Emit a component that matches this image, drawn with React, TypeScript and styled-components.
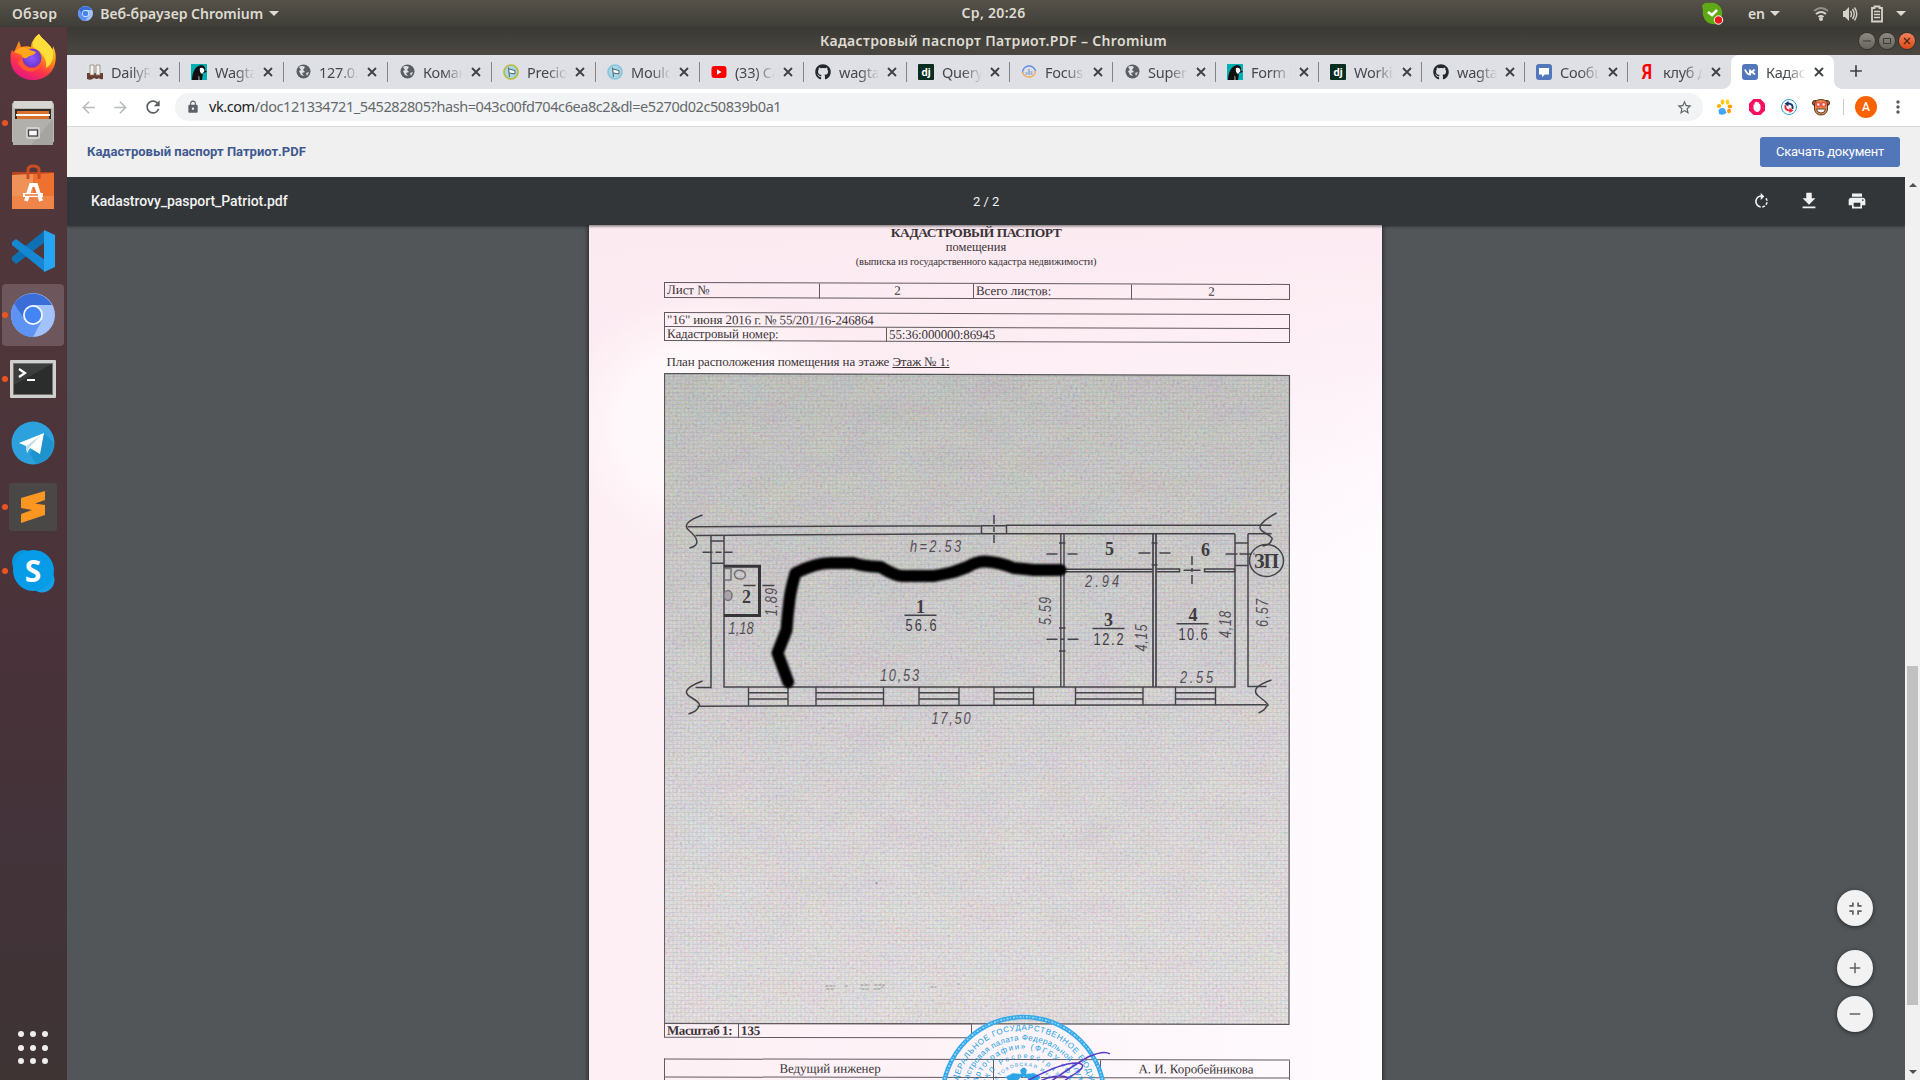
import React from 'react';
import styled, { createGlobalStyle } from 'styled-components';
import { FaGithub } from 'react-icons/fa';
import {
  MdArrowBack,
  MdArrowForward,
  MdRefresh,
  MdLock,
  MdStarBorder,
  MdRotateRight,
  MdFileDownload,
  MdPrint,
  MdAdd,
  MdMoreVert,
  MdFullscreenExit,
  MdRemove,
} from 'react-icons/md';

const ui = '"Noto Sans", "Open Sans", sans-serif';
const serif = '"Liberation Serif", "Times New Roman", serif';

const Global = createGlobalStyle`
  * { box-sizing: border-box; }
  html, body { margin: 0; overflow: hidden; }
  svg { display: block; flex: none; }
`;

const Desktop = styled.div`
  width: 1920px;
  height: 1080px;
  display: flex;
  flex-direction: column;
  overflow: hidden;
  font-family: ${ui};
`;

/* ---------- system bar ---------- */

const SystemBar = styled.header`
  height: 27px;
  flex: none;
  display: grid;
  grid-template-columns: 1fr auto 1fr;
  align-items: center;
  background: linear-gradient(#56524a, #3e3d37);
  color: #dfdbd2;
  font-size: 14px;
  font-weight: 600;
  white-space: nowrap;
`;

const SystemLeft = styled.div`
  display: flex;
  align-items: center;
  padding-left: 12px;
`;

const SystemText = styled.span<{ $gap?: number; $track?: number }>`
  margin-left: ${(p) => p.$gap ?? 0}px;
  letter-spacing: ${(p) => p.$track ?? 0}px;
`;

const Clock = styled.div`
  letter-spacing: 0.3px;
  padding: 0 0 2px 67px;
`;

const SystemRight = styled.div`
  display: flex;
  align-items: center;
  justify-content: flex-end;
  padding-right: 14px;
`;

const TrayItem = styled.div<{ $right?: number }>`
  margin-right: ${(p) => p.$right ?? 0}px;
  display: flex;
  align-items: center;
`;

const Caret = styled.i<{ $gap?: number }>`
  margin-left: ${(p) => p.$gap ?? 0}px;
  border: 5px solid transparent;
  border-top-color: #dfdbd2;
  border-bottom: 0;
`;

/* ---------- launcher ---------- */

const Main = styled.div`
  flex: 1;
  display: flex;
  min-height: 0;
`;

const Launcher = styled.nav`
  width: 67px;
  flex: none;
  display: flex;
  flex-direction: column;
  background: linear-gradient(#53383c, #4c353a 40%, #493239 60%, #43333a 78%, #3e3434);
`;

const LauncherItem = styled.div<{ $active?: boolean }>`
  height: 62px;
  margin: 0 3px 2px 2px;
  border-radius: 4px;
  display: flex;
  align-items: center;
  background: ${(p) => (p.$active ? '#6d575c' : 'transparent')};
  &:first-child { margin-top: 1px; padding-bottom: 3px; }
`;

const RunningDot = styled.i<{ $on?: boolean }>`
  width: 6px;
  height: 6px;
  border-radius: 50%;
  background: ${(p) => (p.$on ? '#e95420' : 'transparent')};
  margin-right: 1px;
`;

const AppsGrid = styled.div`
  margin: auto 0 14px 18px;
  display: grid;
  grid-template-columns: repeat(3, 6px);
  gap: 6px;
  i { height: 6px; border-radius: 50%; background: #eee; }
  height: 35px;
`;

/* ---------- window ---------- */

const Window = styled.div`
  flex: 1;
  display: flex;
  flex-direction: column;
  min-width: 0;
`;

const TitleBar = styled.div`
  height: 28px;
  flex: none;
  display: grid;
  grid-template-columns: 1fr auto 1fr;
  align-items: center;
  background: linear-gradient(#3a3934, #4b4841);
  color: #dfdbd2;
  font-size: 14px;
  font-weight: 600;
  padding-bottom: 1px;
`;

const TitleText = styled.div`
  grid-column: 2;
  letter-spacing: 0.33px;
  white-space: nowrap;
`;

const WindowButtons = styled.div`
  display: flex;
  gap: 4px;
  justify-content: flex-end;
  padding-right: 5px;
`;

const WindowButton = styled.i<{ $close?: boolean }>`
  width: 16px;
  height: 16px;
  border-radius: 50%;
  display: grid;
  place-items: center;
  background: ${(p) => (p.$close ? 'linear-gradient(#f4825c,#dd4814)' : 'linear-gradient(#8c8a83,#66645d)')};
  box-shadow: 0 0 0 1px #34322e;
`;

const TabStrip = styled.div`
  height: 34px;
  flex: none;
  background: #dee0e6;
  display: flex;
  padding-left: 9px;
`;

const Tab = styled.div<{ $w: number; $active?: boolean; $bare?: boolean }>`
  width: ${(p) => p.$w}px;
  flex: none;
  display: flex;
  align-items: center;
  padding: 0 0 1px 11px;
  position: relative;
  background: ${(p) => (p.$active ? '#fff' : 'transparent')};
  border-radius: 8px 8px 0 0;
  &::after {
    content: '';
    position: absolute;
    right: 0;
    top: 7px;
    width: 1px;
    height: 20px;
    background: ${(p) => (p.$active || p.$bare ? 'transparent' : '#80838a')};
  }
`;

const TabFoot = styled.i<{ $left?: boolean }>`
  position: absolute;
  bottom: 0;
  ${(p) => (p.$left ? 'left: -8px' : 'right: -8px')};
  width: 8px;
  height: 8px;
  background: radial-gradient(circle at ${(p) => (p.$left ? '0 0' : '100% 0')}, transparent 7.5px, #fff 8px);
`;

const Favicon = styled.span`
  width: 16px;
  height: 16px;
  flex: none;
  display: grid;
  place-items: center;
`;

const TabLabel = styled.span`
  margin-left: 8px;
  width: 41px;
  overflow: hidden;
  white-space: nowrap;
  font-size: 14.5px;
  letter-spacing: -0.25px;
  color: #45484d;
  mask-image: linear-gradient(90deg, #000 50%, transparent 98%);
`;

const TabClose = styled.span`
  margin-left: 7px;
`;

const NewTab = styled.span`
  margin: 6px 0 0 12px;
  color: #3c4043;
`;

const Toolbar = styled.div`
  height: 38px;
  flex: none;
  display: flex;
  align-items: center;
  background: #fff;
  border-bottom: 1px solid #d8d9de;
  padding: 0 11px 1px 12px;
`;

const NavIcon = styled.span<{ $muted?: boolean }>`
  width: 20px;
  margin-right: 12px;
  color: ${(p) => (p.$muted ? '#b9bbbe' : '#5a5d61')};
`;

const Omnibox = styled.div`
  width: 1528px;
  height: 28px;
  border-radius: 14px;
  background: #f1f3f4;
  display: flex;
  align-items: center;
  padding: 0 10px 0 11px;
  color: #5f6368;
`;

const Url = styled.span`
  margin-left: 9px;
  padding-bottom: 2px;
  flex: 1;
  font-size: 14.5px;
  letter-spacing: -0.43px;
  color: #66696d;
  b { font-weight: 400; color: #202124; }
`;

const Extensions = styled.div`
  display: flex;
  gap: 12px;
  margin-left: 12px;
`;

const Divider = styled.i`
  width: 1px;
  height: 16px;
  background: #c8cacd;
  margin: 0 11px 0 12px;
`;

const Avatar = styled.div`
  width: 22px;
  height: 22px;
  border-radius: 50%;
  background: #fb6300;
  color: #fff;
  font: 500 12px Roboto, sans-serif;
  display: grid;
  place-items: center;
  margin-right: 11px;
`;

const DocBar = styled.div`
  height: 50px;
  flex: none;
  background: #f0f0f0;
  display: flex;
  align-items: center;
  justify-content: space-between;
  padding: 0 20px;
  font-family: Roboto, sans-serif;
  font-size: 13px;
`;

const DocTitle = styled.div`
  color: #42598f;
  font-weight: 700;
  padding-bottom: 1px;
`;

const DownloadButton = styled.div`
  width: 140px;
  height: 30px;
  border-radius: 3px;
  background: #5276ba;
  color: #fff;
  letter-spacing: -0.25px;
  padding-bottom: 1px;
  display: grid;
  place-items: center;
`;

const Viewport = styled.div`
  flex: 1;
  display: flex;
  min-height: 0;
`;

const Pdf = styled.div`
  flex: 1;
  display: flex;
  flex-direction: column;
  background: #525659;
  position: relative;
  overflow: hidden;
`;

const PdfBar = styled.div`
  height: 48px;
  flex: none;
  background: #323639;
  box-shadow: 0 1px 3px rgba(0, 0, 0, 0.6);
  z-index: 2;
  color: #f1f1f1;
  display: grid;
  grid-template-columns: 882px auto 1fr;
  align-items: center;
  font: 500 14px Roboto, sans-serif;
  letter-spacing: -0.04px;
  padding: 0 36px 0 24px;
`;

const PageCount = styled.div`
  font-weight: 400;
  font-size: 13px;
`;

const PdfActions = styled.div`
  display: grid;
  justify-content: end;
  justify-items: center;
  align-items: center;
  grid-template-columns: repeat(3, 24px);
  gap: 24px;
`;

const Scroller = styled.div`
  width: 15px;
  flex: none;
  background: #f1f1f1;
  display: flex;
  flex-direction: column;
  align-items: center;
`;

const ScrollArrow = styled.i<{ $up?: boolean }>`
  border: 4px solid transparent;
  ${(p) =>
    p.$up
      ? 'border-bottom-color:#505050;border-top:0;margin-top:6px'
      : 'border-top-color:#505050;border-bottom:0;margin-top:auto;margin-bottom:6px'};
`;

const ScrollThumb = styled.i`
  width: 11px;
  height: 339px;
  background: #c1c1c1;
  margin-top: 479px;
`;

const ZoomStack = styled.div`
  position: absolute;
  right: 32px;
  bottom: 48px;
  display: flex;
  flex-direction: column;
`;

const ZoomButton = styled.div<{ $after?: number }>`
  width: 36px;
  height: 36px;
  border-radius: 50%;
  background: #f2f2f2;
  box-shadow: 0 1px 4px rgba(0, 0, 0, 0.55);
  color: #616161;
  display: grid;
  place-items: center;
  margin-bottom: ${(p) => p.$after ?? 0}px;
`;

/* ---------- scanned page ---------- */

const Sheet = styled.article`
  width: 793px;
  height: 900px;
  flex: none;
  margin: 0 auto;
  position: relative;
  left: -1px;
  background:
    radial-gradient(ellipse 150px 130px at 120px 200px, #fff8fa 55%, transparent 100%),
    linear-gradient(#fceaf1 0, transparent 330px),
    linear-gradient(90deg, #fdeff4, #fdf5f9 60%, #fefafe 92%, #fffcff);
  box-shadow: 0 0 5px rgba(0, 0, 0, 0.75);
  padding: 0 93px 0 75px;
  font-family: ${serif};
  color: #3a3438;
  font-size: 13px;
  white-space: nowrap;
`;

const Heading = styled.div<{ $size: number; $bold?: boolean; $h: number; $track?: number }>`
  height: ${(p) => p.$h}px;
  line-height: ${(p) => p.$h}px;
  font-size: ${(p) => p.$size}px;
  font-weight: ${(p) => (p.$bold ? 700 : 400)};
  letter-spacing: ${(p) => p.$track ?? 0}px;
  text-align: center;
`;

const Grid = styled.div<{ $cols: string; $rows: string; $top: number; $tilt: number; $w?: number }>`
  margin-top: ${(p) => p.$top}px;
  width: ${(p) => p.$w ?? 626}px;
  display: grid;
  grid-template-columns: ${(p) => p.$cols};
  grid-template-rows: ${(p) => p.$rows};
  border: solid #625a60;
  border-width: 1px 0 0 1px;
  transform: skewY(${(p) => p.$tilt}deg);
`;

const Cell = styled.div<{ $center?: boolean; $bold?: boolean; $span?: number; $track?: number }>`
  grid-column: span ${(p) => p.$span ?? 1};
  border: solid #625a60;
  border-width: 0 1px 1px 0;
  padding-left: 2px;
  display: flex;
  align-items: center;
  justify-content: ${(p) => (p.$center ? 'center' : 'flex-start')};
  font-weight: ${(p) => (p.$bold ? 700 : 400)};
  letter-spacing: ${(p) => p.$track ?? -0.07}px;
`;

const PlanCaption = styled.div`
  margin: 12px 0 0 3px;
  height: 16px;
  line-height: 16px;
  letter-spacing: -0.13px;
`;

const PlanFrame = styled.div`
  margin-top: 3px;
  height: 652px;
`;

const Stamp = styled.svg`
  position: absolute;
  left: 341px;
  top: 785px;
`;

/* ---------- small drawings ---------- */

const ChromiumLogo = ({ size }: { size: number }) => (
  <svg width={size} height={size} viewBox="0 0 44 44">
    <circle cx="22" cy="22" r="22" fill="#a1c2fa" />
    <path d="M3 11A22 22 0 0 1 41 12H22L13 26Z" fill="#3b6dd8" />
    <path d="M3 11A22 22 0 0 0 22 44L31 27L22 31L13 26Z" fill="#5c93f5" />
    <circle cx="22" cy="22" r="10" fill="#f4f8ff" />
    <circle cx="22" cy="22" r="8.2" fill="#4485f4" />
  </svg>
);

const Firefox = () => (
  <svg width="46" height="47" viewBox="0 0 46 47">
    <defs>
      <linearGradient id="fxa" x1="0.8" y1="0" x2="0.3" y2="1">
        <stop offset="0" stopColor="#fff44f" />
        <stop offset="0.4" stopColor="#ff980e" />
        <stop offset="0.7" stopColor="#ff3647" />
        <stop offset="1" stopColor="#e31587" />
      </linearGradient>
      <radialGradient id="fxb">
        <stop offset="0" stopColor="#9059ff" />
        <stop offset="1" stopColor="#6b38c9" />
      </radialGradient>
    </defs>
    <path
      d="M29 0C31 4 39 9 42 15C43 17 43 12 43 12C47 20 46 27 44 33C38 47 19 50 8 41C0 35-1 23 2 16L4 18L9 7L11 13C15 12 18 12 21 13C21 8 25 3 29 0Z"
      fill="url(#fxa)"
    />
    <path d="M29 0C31 4 39 9 42 15C45 22 42 31 36 34C38 25 30 16 23 13C22 8 25 3 29 0Z" fill="#ffde3b" />
    <circle cx="22" cy="24" r="9.5" fill="url(#fxb)" />
    <path d="M4 18C9 12 15 12 20 16L26 18C24 22 20 21 18 23C15 26 11 23 12 21Z" fill="#ffa51e" />
    <path d="M12 24C12 34 24 37 31 31C27 41 11 39 8 28Z" fill="#ff592f" />
  </svg>
);

const Files = () => (
  <svg width="44" height="46" viewBox="0 0 44 46">
    <path d="M3 1H41L43 4V42H1V4Z" fill="#b9b7b4" />
    <path d="M3 1H41L42 8H2Z" fill="#d6d5d2" />
    <rect x="4" y="9" width="36" height="12" fill="#2f2b28" />
    <path d="M6 11H38V20H6Z" fill="#d9702e" />
    <path d="M5 14H39V16H5Z" fill="#fff" />
    <path d="M2 19H42V45H2Z" fill="#a5a4a1" />
    <path d="M2 19H42L20 45H2Z" fill="#b1b0ad" />
    <rect x="15" y="27" width="14" height="12" rx="2" fill="#d0d0ce" />
    <rect x="17.500" y="30" width="9" height="6" fill="#f7f7f7" stroke="#444" strokeWidth="1.3" />
  </svg>
);

const SoftwareBag = () => (
  <svg width="44" height="46" viewBox="0 0 44 46">
    <path d="M1 8H43V15H1Z" fill="#b8431c" />
    <path d="M1 11L43 9V45H1Z" fill="#ee7130" />
    <path d="M1 11L22 10V35H1Z" fill="#ee9258" />
    <path d="M1 32H43V45H1Z" fill="#f08549" />
    <path d="M17 15V6Q17 2 22 2Q28 2 28 6V15" stroke="#c84d24" strokeWidth="3" fill="none" />
    <path d="M15 37L20 21H25L30 37M12 31H32" stroke="#fff" strokeWidth="4" fill="none" />
    <path d="M14 31H27" stroke="#ed7331" strokeWidth="1.5" />
  </svg>
);

const VsCode = () => (
  <svg width="44" height="44" viewBox="0 0 44 44">
    <path d="M1 31L5 35L34 13V1L1 28Z" fill="#0f70b6" />
    <path d="M1 13L5 10L34 31V43L1 16Z" fill="#1687d2" />
    <path d="M33 1L44 6V38L33 43Z" fill="#27a5f2" />
  </svg>
);

const Terminal = () => (
  <svg width="46" height="38" viewBox="0 0 46 38">
    <rect width="46" height="38" rx="1" fill="#cfd0cf" />
    <rect x="3" y="3" width="40" height="32" fill="#747572" />
    <rect x="4" y="4" width="38" height="30" fill="#2b2d2c" />
    <path d="M4 4H42L4 25Z" fill="#3c3e3d" />
    <path d="M9 9L15 13L9 17M17 20H25" stroke="#fff" strokeWidth="2.2" fill="none" />
  </svg>
);

const Telegram = () => (
  <svg width="44" height="44" viewBox="0 0 44 44">
    <circle cx="22" cy="22" r="21.5" fill="#2ca1dd" />
    <path d="M33 12L43 22Q41 40 25 43L19 33Z" fill="#178bc4" opacity=".6" />
    <path d="M8 22L33 12L29 33L19 27L16 32L15 25Z" fill="#fff" />
    <path d="M15 25L29 15L18 27L16 32Z" fill="#c5dcea" />
  </svg>
);

const Sublime = () => (
  <svg width="48" height="48" viewBox="0 0 48 48">
    <rect width="48" height="48" rx="3" fill="#4a4847" />
    <path d="M12 15L36 8V17L26 20.500L36 22V32L12 40V31L23 27L12 25Z" fill="#fd9722" />
  </svg>
);

const SkypeText = styled.text`
  font: 700 30px 'Open Sans', sans-serif;
  fill: #fff;
`;

const Skype = () => (
  <svg width="44" height="44" viewBox="0 0 44 44">
    <circle cx="13" cy="13" r="12" fill="#0894d8" />
    <circle cx="31" cy="31" r="12.500" fill="#16a0e6" />
    <circle cx="22.500" cy="21.500" r="20.500" fill="#069ce8" />
    <SkypeText x="22" y="33" textAnchor="middle">S</SkypeText>
  </svg>
);

const GlobeIcon = () => (
  <svg width="15" height="15" viewBox="0 0 15 15">
    <circle cx="7.500" cy="7.500" r="7" fill="#5b5f64" />
    <path d="M3 3Q6 1 9 3L7 6L9 8L6 9L8 12L5 11L3 7L5 6Z" fill="#dee0e6" />
    <path d="M10 9L13 8L11 12Z" fill="#dee0e6" />
  </svg>
);

const IconText = styled.text<{ $size: number; $fill: string }>`
  font: 700 ${(p) => p.$size}px Roboto, sans-serif;
  fill: ${(p) => p.$fill};
`;

const Glyph = ({ kind }: { kind: string }) => {
  switch (kind) {
    case 'globe':
      return <GlobeIcon />;
    case 'github':
      return <FaGithub size={16} color="#24292e" />;
    case 'youtube':
      return (
        <svg width="16" height="16" viewBox="0 0 16 16">
          <rect x=".5" y="2" width="15" height="12" rx="3" fill="#f00" />
          <path d="M6 5.300L10.500 8L6 10.700Z" fill="#fff" />
        </svg>
      );
    case 'django':
      return (
        <svg width="16" height="16" viewBox="0 0 16 16">
          <rect width="16" height="16" rx="1" fill="#092e20" />
          <IconText $size={11} $fill="#fff" x="8" y="11.500" textAnchor="middle">dj</IconText>
        </svg>
      );
    case 'wagtail':
      return (
        <svg width="16" height="16" viewBox="0 0 16 16">
          <rect width="16" height="16" fill="#00b0b1" />
          <path d="M1 16C1 9 4 2 10 1C13 1 15 4 14 6L16 8L12 9L11 16Z" fill="#111" />
          <path d="M9 4Q13 3 13.500 7L11 10Q8 8 9 4Z" fill="#fff" />
          <path d="M7 12Q9 11 9 16H7Z" fill="#666" />
        </svg>
      );
    case 'boots':
      return (
        <svg width="16" height="16" viewBox="0 0 16 16">
          <rect width="16" height="11" fill="#d9e6e6" />
          <path d="M0 9H16V15Q13 16 12 14Q10 16 7 14Q4 17 0 15Z" fill="#6a3f31" />
          <path d="M3 1H7V11H3ZM9 1H13V11H9Z" fill="#f7f4ef" stroke="#8d7a70" strokeWidth=".8" />
        </svg>
      );
    case 'flagy':
    case 'flag':
      return (
        <svg width="16" height="16" viewBox="0 0 16 16">
          <circle cx="8" cy="8" r="7" fill="#a9d7e6" stroke={kind === 'flagy' ? '#b9bb3d' : '#8cc4dc'} strokeWidth="1.700" />
          <path d="M5.500 3.500L6.500 13M6 5L12 6.500V10L6.500 9" fill="#f5fafc" stroke="#4e6270" strokeWidth="1" />
        </svg>
      );
    case 'focus':
      return (
        <svg width="16" height="16" viewBox="0 0 16 16" fill="none">
          <path d="M1.500 9A6.600 6.600 0 0 1 14.500 7" stroke="#5c8fe8" strokeWidth="1.400" />
          <path d="M1.500 8A6.600 6.600 0 0 0 14.500 7" stroke="#f0a84a" strokeWidth="1.400" />
          <path d="M5.500 11V8M8 11V5M10.500 11V7" stroke="#9fb5d8" strokeWidth="2" />
        </svg>
      );
    case 'chat':
      return (
        <svg width="16" height="16" viewBox="0 0 16 16">
          <rect width="16" height="16" rx="3" fill="#5277ba" />
          <path d="M3 4H13V10.500H9L6 13V10.500H3Z" fill="#fff" />
        </svg>
      );
    case 'yandex':
      return (
        <svg width="16" height="16" viewBox="0 0 16 16">
          <IconText $size={20} $fill="#f00" x="8" y="15" textAnchor="middle" textLength="10" lengthAdjust="spacingAndGlyphs">Я</IconText>
        </svg>
      );
    default:
      return (
        <svg width="16" height="16" viewBox="0 0 16 16">
          <rect width="16" height="16" rx="3" fill="#5277ba" />
          <path d="M3 5.500Q5 10.500 8 10.500V5.500M8 8Q11 8 12.500 5.500M8.500 8Q11 8 13 10.500" stroke="#fff" strokeWidth="1.900" fill="none" />
        </svg>
      );
  }
};

const tabs: [string, string][] = [
  ['boots', 'DailyRe'],
  ['wagtail', 'Wagtail'],
  ['globe', '127.0.0'],
  ['globe', 'Команд'],
  ['flagy', 'Precios'],
  ['flag', 'Mouldi'],
  ['youtube', '(33) Ca'],
  ['github', 'wagtail'],
  ['django', 'QueryS'],
  ['focus', 'Focuse'],
  ['globe', 'SuperS'],
  ['wagtail', 'Form b'],
  ['django', 'Workin'],
  ['github', 'wagtail'],
  ['chat', 'Сообщ'],
  ['yandex', 'клуб д'],
  ['vk', 'Кадаст'],
];

const PawIcon = () => (
  <svg width="20" height="20" viewBox="0 0 20 20">
    <path d="M3.500 13Q6 9.500 10 12L11.500 16Q8 19 4 17Z" fill="#42a5f5" />
    <ellipse cx="4" cy="9" rx="2.200" ry="2" fill="#ffb300" />
    <ellipse cx="7.500" cy="5" rx="1.900" ry="2.700" fill="#ffc61a" />
    <ellipse cx="12.500" cy="5" rx="1.900" ry="2.700" fill="#ffd21f" />
    <ellipse cx="15" cy="9.500" rx="2.300" ry="1.900" fill="#ffa000" />
    <ellipse cx="14" cy="14" rx="2" ry="2.200" fill="#ff9800" />
  </svg>
);

const HandIcon = () => (
  <svg width="20" height="20" viewBox="0 0 20 20">
    <path d="M6.500 2H13.500L18 6.500V13.500L13.500 18H6.500L2 13.500V6.500Z" fill="#f8105f" />
    <path d="M6.500 9Q6.500 6 7.500 8Q7.500 4 8.600 5.500Q9 3.500 10.300 5.500Q11.800 4 12 6.500Q13.500 6.500 13.500 9V12Q12.500 15 10 15Q7.500 14.500 6.500 12Z" fill="#fff" />
  </svg>
);

const SyncIcon = () => (
  <svg width="20" height="20" viewBox="0 0 20 20" fill="none">
    <circle cx="10" cy="10" r="7.500" fill="#fff" stroke="#2b9fd3" strokeWidth="1" />
    <path d="M13.500 12Q14.500 6.500 9 6.500" stroke="#12356f" strokeWidth="2" />
    <path d="M9.500 4V9.500L5.500 6.700Z" fill="#12356f" />
    <path d="M6.500 8Q5.500 13.500 11 13.500" stroke="#ed2733" strokeWidth="2" />
    <path d="M10.500 16V10.700L14.500 13.400Z" fill="#ed2733" />
  </svg>
);

const MonkeyIcon = () => (
  <svg width="20" height="20" viewBox="0 0 20 20">
    <circle cx="4" cy="6" r="2.500" fill="#c96a2b" stroke="#3b2112" />
    <circle cx="16" cy="6" r="2.500" fill="#c96a2b" stroke="#3b2112" />
    <path d="M3.500 8Q3.500 2.500 10 2.500T16.500 8V13Q15 18 10 18T3.500 13Z" fill="#df8a45" stroke="#3b2112" strokeWidth=".8" />
    <circle cx="7.300" cy="7.500" r="2" fill="#fff" stroke="#f14d4b" strokeWidth="1.500" />
    <circle cx="12.700" cy="7.500" r="2" fill="#fff" stroke="#f14d4b" strokeWidth="1.500" />
    <path d="M5.500 12H14.500Q14 16 10 16T5.500 12Z" fill="#fff" stroke="#3b2112" strokeWidth=".8" />
  </svg>
);

/* ---------- floor plan ---------- */

const PlanText = styled.text<{ $size?: number; $upright?: boolean; $bold?: boolean }>`
  font-family: ${(p) => (p.$bold ? serif : '"Liberation Sans Narrow", "Liberation Sans", Arial, sans-serif')};
  font-size: ${(p) => p.$size ?? 16}px;
  font-style: ${(p) => (p.$upright || p.$bold ? 'normal' : 'italic')};
  font-weight: ${(p) => (p.$bold ? 700 : 400)};
  fill: ${(p) => (p.$upright || p.$bold ? '#3f3c41' : '#545056')};
`;

interface NoteProps {
  x: number;
  y: number;
  w?: number;
  vertical?: boolean;
  bold?: boolean;
  upright?: boolean;
  size?: number;
  children: string;
}

/* Dimension digits are drawn narrow and widely spaced, as on a drafting stencil. */
const Note = ({ x, y, w, vertical, bold, upright, size, children }: NoteProps) => {
  const squeeze = bold ? 1 : 0.8;
  const turn = vertical ? `rotate(-90 ${x} ${y}) ` : '';
  return (
    <PlanText
      $bold={bold}
      $upright={upright}
      $size={size}
      x={0}
      y={0}
      textAnchor="middle"
      textLength={w ? w / squeeze : undefined}
      lengthAdjust="spacing"
      transform={`${turn}translate(${x} ${y}) scale(${squeeze} 1)`}
    >
      {children}
    </PlanText>
  );
};

const windows: [number, number][] = [
  [748, 787.5],
  [815.5, 883],
  [918.5, 958.5],
  [993.5, 1033],
  [1075, 1142.5],
  [1175, 1215],
];

const FloorPlan = () => (
  <svg width="627" height="652" viewBox="663.5 373 627 652">
    <defs>
      <linearGradient id="paper" x1="0" y1="0" x2="0.1" y2="1">
        <stop offset="0" stopColor="#c4c5c3" />
        <stop offset="0.2" stopColor="#cecccb" />
        <stop offset="0.45" stopColor="#dad7d9" />
        <stop offset="0.65" stopColor="#e6e1e4" />
        <stop offset="1" stopColor="#f1ebed" />
      </linearGradient>
      <pattern id="weave" width="4" height="4" patternUnits="userSpaceOnUse">
        <path d="M0 .5H4M.5 0V4" stroke="#6d7470" strokeWidth="1" opacity="0.14" />
      </pattern>
      <filter id="grain" x="0" y="0" width="100%" height="100%">
        <feTurbulence type="fractalNoise" baseFrequency="0.4" numOctaves="3" seed="4" />
        <feColorMatrix values="1.7 0 0 0 -0.35  0 1.7 0 0 -0.35  0 0 1.7 0 -0.35  0 0 0 0 1" />
      </filter>
      <filter id="blotch" x="0" y="0" width="100%" height="100%">
        <feTurbulence type="fractalNoise" baseFrequency="0.025 0.04" numOctaves="3" seed="9" />
        <feColorMatrix values="1 0 0 0 0  0 1 0 0 0  0 0 1 0 0  0 0 0 0 1" />
      </filter>
      <filter id="soft" x="-5%" y="-10%" width="110%" height="120%">
        <feGaussianBlur stdDeviation="1.2" />
      </filter>
      <clipPath id="frame">
        <path d="M664 373.500L1289 375.500L1288.500 1024.300L663.800 1023.500Z" />
      </clipPath>
    </defs>
    <g clipPath="url(#frame)">
      <rect x="663" y="373" width="628" height="652" fill="url(#paper)" />
      <rect x="663" y="373" width="628" height="652" filter="url(#blotch)" opacity="0.08" />
      <rect x="663" y="373" width="628" height="652" filter="url(#grain)" opacity="0.16" />
      <rect x="663" y="373" width="628" height="652" fill="url(#weave)" />
    </g>
    <path d="M664 373.500L1289 375.500L1288.500 1024.300L663.800 1023.500Z" fill="none" stroke="#57565a" strokeWidth="1.200" />

    <g fill="none" stroke="#45434a" strokeWidth="1.500">
      <path d="M687 526.700L981 525.700V533.800M1006 533.700V525.300H1271M695 535.500L981 533.800L1234.500 533.700M1247.500 533.700H1271M981 525.700H1006" />
      <path d="M702 515Q680 523 688 530T696 540Q698 546 689 548M1276 513Q1252 526 1263 532T1271 540Q1270 545 1262 546" />
      <path d="M702 681Q678 690 690 697T698 707Q697 711 688 714M1271 680Q1247 688 1259 697T1266 706Q1265 710 1258 713" />
      <path d="M710.500 535V687.500H695M723.500 535V687H1234.500V533.700M1247.500 533.700V686.500H1266M697 706.200L1266 704.700" />
      <path d="M710.500 541H723.500M710.500 563.300H723.500M1234.500 543H1247.500M1234.500 565.500H1247.500" />
      <path d="M702 552.300H712M715 552.300H721M724 552.300H732M993.500 515V524M993.500 527V532M993.500 535V543" />
      <path d="M1046 554H1057M1067 554H1077M1046 639.300H1057M1060 639.300H1064M1067 639.300H1078M1138 553H1150M1159 553H1170M1225 554H1254" strokeDasharray="12 2" />
      <path d="M1060.300 534V687M1063.500 534V687" strokeWidth="1.400" />
      <path d="M1152.500 534V687M1155.500 534V687" strokeWidth="1.700" />
      <path d="M1058.500 543H1065M1058.500 628H1065M1058.500 651H1065M1151 543H1157M1151 565H1157" />
      <path d="M1064 569.300H1152M1064 571.800H1152M1156 569H1179V571.700H1156M1204 569H1234V571.700H1204ZM1183 570.300H1200M1191.500 556V565M1191.500 568V572M1191.500 575V584" />
      <path d="M723.500 566.300H759V615.600H723.500" stroke="#37353a" strokeWidth="3" />
      <path d="M724 568.500H730.500V580H724M734 574C735 568.500 744 569 745 575C744 581 734 580 734 574Z" stroke="#777278" />
      <ellipse cx="727.500" cy="595.500" rx="4" ry="5" fill="#aaa5aa" stroke="#777278" />
      <path d="M743 585.500H755M762 585.500H774" />
      <path d="M904 615.300H936M1092 628.500H1124M1176 623.700H1208" />
      {windows.map(([a, b]) => (
        <path key={a} d={`M${a} 687V705.500M${b} 687V705.500M${a} 692.700H${b}M${a} 699H${b}`} strokeWidth="1.400" />
      ))}
      <ellipse cx="1266" cy="560.500" rx="17" ry="16" />
    </g>

    <path
      d="M787.700 682L777 653L786 630Q787 615 789 600Q790 590 795 573Q815 563 830 563H853Q860 566 880 567Q895 576 902 576H933Q945 574 953 572L967 567Q976 561 985 561.500Q998 562 1013 568Q1025 569 1033 570H1060"
      fill="none"
      stroke="#000"
      strokeWidth="12"
      strokeLinejoin="round"
      strokeLinecap="round"
      filter="url(#soft)"
    />

    <Note x={935} y={551.5} w={51}>h=2.53</Note>
    <Note x={740.5} y={633.5} w={25}>1,18</Note>
    <Note x={776} y={602} w={28} vertical>1,89</Note>
    <Note x={899} y={681} w={39}>10,53</Note>
    <Note x={950.5} y={724} w={39}>17,50</Note>
    <Note x={1050} y={611} w={28} vertical>5.59</Note>
    <Note x={1101.5} y={587} w={34}>2.94</Note>
    <Note x={1146.5} y={638} w={27} vertical>4,15</Note>
    <Note x={1230} y={624.5} w={27} vertical>4,18</Note>
    <Note x={1267.5} y={613} w={28} vertical>6,57</Note>
    <Note x={1196} y={682.5} w={33}>2.55</Note>
    <Note x={920} y={612.5} bold size={18}>1</Note>
    <Note x={746} y={603} bold size={18}>2</Note>
    <Note x={1108} y={626} bold size={18}>3</Note>
    <Note x={1192.5} y={621} bold size={18}>4</Note>
    <Note x={1109} y={555} bold size={18}>5</Note>
    <Note x={1205} y={555.5} bold size={18}>6</Note>
    <Note x={920.5} y={631} w={31} upright>56.6</Note>
    <Note x={1108} y={645} w={30} upright>12.2</Note>
    <Note x={1192.5} y={639.5} w={29} upright>10.6</Note>
    <Note x={1266} y={567.5} w={25} bold size={20}>ЗП</Note>

    <path d="M825 986H835M826 989H834M844 986H848M860 985H869M861 989H868M874 985H884L880 989H873M930 987H936M957 984H959" fill="none" stroke="#969296" strokeDasharray="3 1" />
    <circle cx="876" cy="883" r="1" fill="#888" />
  </svg>
);

const StampText = styled.text<{ $size: number }>`
  font: 400 ${(p) => p.$size}px 'Liberation Sans', Arial, sans-serif;
  fill: #1c9fe2;
`;

const stampRings: { r: number; size: number; span: number; text: string }[] = [
  { r: 68, size: 8, span: 204, text: 'ФЕДЕРАЛЬНОЕ ГОСУДАРСТВЕННОЕ БЮДЖЕТ' },
  { r: 58, size: 8, span: 172, text: 'кадастровая палата Федеральной службы' },
  { r: 49, size: 8, span: 132, text: 'картографии» (ФГБУ «ФКП' },
  { r: 40, size: 7, span: 112, text: '«ФКП Росреестра» по' },
  { r: 32, size: 5, span: 82, text: 'РОСТОКОВСКАЯ ИНН 77' },
];

const OfficeStamp = () => (
  <Stamp width="190" height="70" viewBox="930 1010 190 70">
    <defs>
      {stampRings.map((s) => (
        <path key={s.r} id={`ring${s.r}`} d={`M${1023.5 - s.r} 1098A${s.r} ${s.r} 0 0 1 ${1023.5 + s.r} 1098`} />
      ))}
    </defs>
    <circle cx="1023.500" cy="1098" r="81" fill="none" stroke="#36a9ea" strokeWidth="4.500" />
    <circle cx="1023.500" cy="1098" r="81" fill="none" stroke="#a9dbf6" strokeWidth="1.500" strokeDasharray="2 1.500 1 2" />
    {stampRings.map((s) => (
      <StampText key={s.r} $size={s.size} textAnchor="middle">
        <textPath href={`#ring${s.r}`} startOffset="50%" textLength={s.span}>
          {s.text}
        </textPath>
      </StampText>
    ))}
    <path
      d="M1024 1067L1027 1070L1026 1074L1034 1073L1041 1077L1037 1081H1030L1026 1077H1021L1017 1081H1009L1005 1077L1013 1073L1021 1074L1020 1070Z"
      fill="#2ba5e6"
      stroke="#aee0f7"
      strokeDasharray="2 2"
    />
    <path
      d="M1027 1081Q1062 1062 1078 1063Q1088 1065 1076 1073L1064 1081M1040 1081Q1058 1073 1069 1078M1050 1082Q1074 1065 1088 1057Q1104 1050 1110 1054"
      fill="none"
      stroke="#593bc4"
      strokeWidth="1.500"
    />
  </Stamp>
);

/* ---------- page ---------- */

const launcher: { key: string; icon: React.ReactNode; on?: boolean; active?: boolean; pad: number }[] = [
  { key: 'firefox', icon: <Firefox />, pad: 1 },
  { key: 'files', icon: <Files />, on: true, pad: 2 },
  { key: 'software', icon: <SoftwareBag />, pad: 2 },
  { key: 'code', icon: <VsCode />, pad: 2 },
  { key: 'chromium', icon: <ChromiumLogo size={44} />, on: true, active: true, pad: 2 },
  { key: 'terminal', icon: <Terminal />, on: true, pad: 1 },
  { key: 'telegram', icon: <Telegram />, pad: 2 },
  { key: 'sublime', icon: <Sublime />, on: true, pad: 0 },
  { key: 'skype', icon: <Skype />, on: true, pad: 2 },
];

const LauncherIcon = styled.span<{ $pad: number }>`
  margin-left: ${(p) => p.$pad}px;
`;

export default function App() {
  return (
    <Desktop>
      <Global />
      <SystemBar>
        <SystemLeft>
          <SystemText $track={0.3}>Обзор</SystemText>
          <SystemText $gap={21}>
            <ChromiumLogo size={15} />
          </SystemText>
          <SystemText $gap={7}>Веб-браузер Chromium</SystemText>
          <Caret $gap={6} />
        </SystemLeft>
        <Clock>Ср, 20:26</Clock>
        <SystemRight>
          <TrayItem $right={24}>
            <svg width="23" height="23" viewBox="0 0 23 23">
              <path d="M1 4Q3 0 8 1Q16 0 20 6Q22 10 21 15L17 22Q9 23 5 19Q1 14 2 9Z" fill="#5fa915" />
              <path d="M7 10L11 13L16 8" stroke="#fff" strokeWidth="2.600" fill="none" />
              <circle cx="17.500" cy="18" r="4.200" fill="#e8191c" stroke="#fff" />
            </svg>
          </TrayItem>
          <TrayItem $right={32}>
            en
            <Caret $gap={5} />
          </TrayItem>
          <TrayItem $right={12}>
            <svg width="18" height="15" viewBox="0 0 18 15" fill="none" stroke="#d5d2ca" strokeWidth="2">
              <path d="M2 5Q9-1 16 5" opacity=".5" />
              <path d="M4 8Q9 4 14 8M6.500 11Q9 9 11.500 11" />
              <circle cx="9" cy="13" r="1" />
            </svg>
          </TrayItem>
          <TrayItem $right={12}>
            <svg width="16" height="16" viewBox="0 0 16 16" fill="none" stroke="#d5d2ca">
              <path d="M1 5H3L7 1V15L3 11H1Z" fill="#d5d2ca" stroke="none" />
              <path d="M8.500 5Q10.500 8 8.500 11M10.500 3Q14 8 10.500 13M12.500 1.500Q17 8 12.500 14.500" strokeWidth="1.400" />
            </svg>
          </TrayItem>
          <TrayItem $right={12}>
            <svg width="14" height="18" viewBox="0 0 14 18" fill="none" stroke="#d5d2ca" strokeWidth="1.800">
              <path d="M2 3H4.500V1.500H9.500V3H12V16.500H2Z" />
              <path d="M4 6.500H10M4 9.500H10M4 12.500H10" strokeWidth="1.500" />
            </svg>
          </TrayItem>
          <Caret />
        </SystemRight>
      </SystemBar>
      <Main>
        <Launcher>
          {launcher.map((item) => (
            <LauncherItem key={item.key} $active={item.active}>
              <RunningDot $on={item.on} />
              <LauncherIcon $pad={item.pad}>{item.icon}</LauncherIcon>
            </LauncherItem>
          ))}
          <AppsGrid>
            {Array.from({ length: 9 }, (_, i) => (
              <i key={i} />
            ))}
          </AppsGrid>
        </Launcher>
        <Window>
          <TitleBar>
            <TitleText>Кадастровый паспорт Патриот.PDF – Chromium</TitleText>
            <WindowButtons>
              <WindowButton>
                <svg width="10" height="10"><path d="M1 5H9" stroke="#3c3b37" /></svg>
              </WindowButton>
              <WindowButton>
                <svg width="10" height="10"><path d="M1.500 2.500H8.500V7.500H1.500Z" fill="none" stroke="#3c3b37" /></svg>
              </WindowButton>
              <WindowButton $close>
                <svg width="10" height="10"><path d="M2 2L8 8M8 2L2 8" stroke="#4a2413" strokeWidth="1.200" /></svg>
              </WindowButton>
            </WindowButtons>
          </TitleBar>
          <TabStrip>
            {tabs.map(([icon, label], i) => {
              const active = i === tabs.length - 1;
              return (
                <Tab key={i} $w={i < 7 ? 104 : 103} $active={active} $bare={i === tabs.length - 2}>
                  {active && <TabFoot $left />}
                  <Favicon>
                    <Glyph kind={icon} />
                  </Favicon>
                  <TabLabel>{label}</TabLabel>
                  <TabClose>
                    <svg width="10" height="10">
                      <path d="M1 1L9 9M9 1L1 9" stroke="#3c4043" strokeWidth="1.800" />
                    </svg>
                  </TabClose>
                  {active && <TabFoot />}
                </Tab>
              );
            })}
            <NewTab>
              <MdAdd size={20} />
            </NewTab>
          </TabStrip>
          <Toolbar>
            <NavIcon $muted><MdArrowBack size={19} /></NavIcon>
            <NavIcon $muted><MdArrowForward size={19} /></NavIcon>
            <NavIcon><MdRefresh size={20} /></NavIcon>
            <Omnibox>
              <MdLock size={14} />
              <Url>
                <b>vk.com</b>/doc121334721_545282805?hash=043c00fd704c6ea8c2&dl=e5270d02c50839b0a1
              </Url>
              <MdStarBorder size={17} />
            </Omnibox>
            <Extensions>
              <PawIcon />
              <HandIcon />
              <SyncIcon />
              <MonkeyIcon />
            </Extensions>
            <Divider />
            <Avatar>A</Avatar>
            <MdMoreVert size={20} color="#5a5d61" />
          </Toolbar>
          <DocBar>
            <DocTitle>Кадастровый паспорт Патриот.PDF</DocTitle>
            <DownloadButton>Скачать документ</DownloadButton>
          </DocBar>
          <Viewport>
            <Pdf>
              <PdfBar>
                <div>Kadastrovy_pasport_Patriot.pdf</div>
                <PageCount>2 / 2</PageCount>
                <PdfActions>
                  <MdRotateRight size={19} />
                  <MdFileDownload size={22} />
                  <MdPrint size={20} />
                </PdfActions>
              </PdfBar>
              <Sheet>
                <Heading $h={16} $size={13.5} $track={-0.46} $bold>КАДАСТРОВЫЙ ПАСПОРТ</Heading>
                <Heading $h={13} $size={12.5}>помещения</Heading>
                <Heading $h={15} $size={10.5} $track={-0.15}>(выписка из государственного кадастра недвижимости)</Heading>
                <Grid $top={14} $tilt={0.17} $cols="155px 154px 158px 158px" $rows="15px">
                  <Cell>Лист №</Cell>
                  <Cell $center>2</Cell>
                  <Cell>Всего листов:</Cell>
                  <Cell $center>2</Cell>
                </Grid>
                <Grid $top={14} $tilt={0.2} $cols="222px 403px" $rows="14px 14px">
                  <Cell $span={2} $track={-0.12}>"16" июня 2016 г. № 55/201/16-246864</Cell>
                  <Cell $track={-0.12}>Кадастровый номер:</Cell>
                  <Cell $track={-0.12}>55:36:000000:86945</Cell>
                </Grid>
                <PlanCaption>
                  План расположения помещения на этаже <u>Этаж № 1:</u>
                </PlanCaption>
                <PlanFrame>
                  <FloorPlan />
                </PlanFrame>
                <Grid $top={-2} $w={308} $tilt={0.1} $cols="74px 233px" $rows="14px">
                  <Cell $bold $track={-0.4}>Масштаб 1:</Cell>
                  <Cell $bold>135</Cell>
                </Grid>
                <Grid $top={21} $tilt={0.1} $cols="329px 107px 189px" $rows="18px 18px">
                  <Cell $center>Ведущий инженер</Cell>
                  <Cell />
                  <Cell $center>А. И. Коробейникова</Cell>
                  <Cell />
                  <Cell />
                  <Cell />
                </Grid>
                <OfficeStamp />
              </Sheet>
              <ZoomStack>
                <ZoomButton $after={24}><MdFullscreenExit size={21} /></ZoomButton>
                <ZoomButton $after={10}><MdAdd size={18} /></ZoomButton>
                <ZoomButton><MdRemove size={18} /></ZoomButton>
              </ZoomStack>
            </Pdf>
            <Scroller>
              <ScrollArrow $up />
              <ScrollThumb />
              <ScrollArrow />
            </Scroller>
          </Viewport>
        </Window>
      </Main>
    </Desktop>
  );
}
